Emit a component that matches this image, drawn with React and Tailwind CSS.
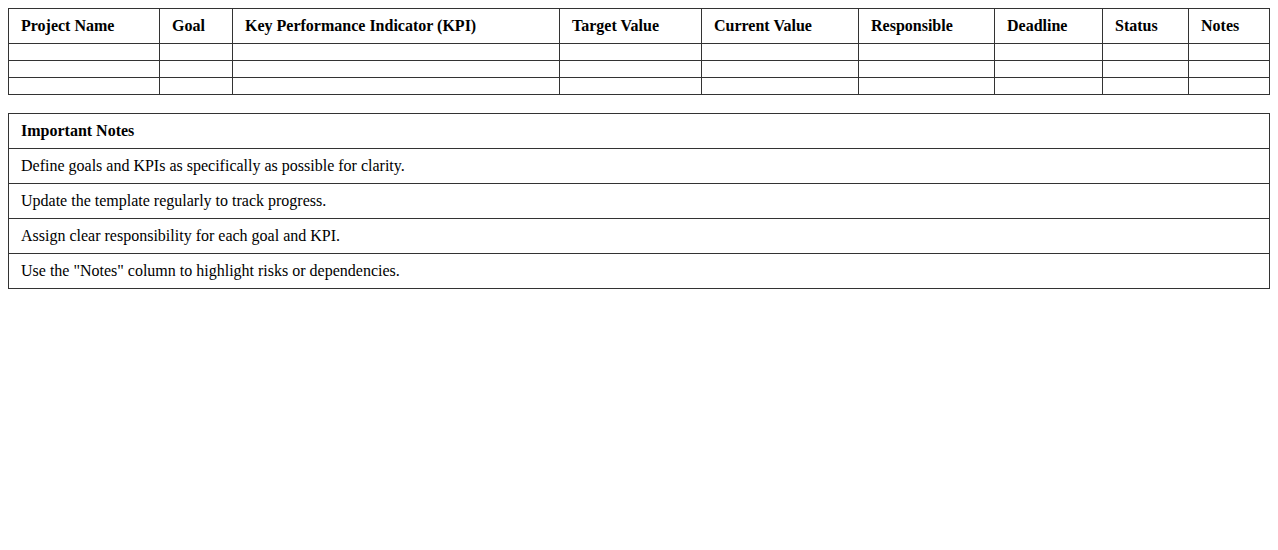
import React from "react";

const columns = [
  { label: "Project Name", width: "w-[151px]" },
  { label: "Goal", width: "w-[73px]" },
  { label: "Key Performance Indicator (KPI)", width: "w-[327px]" },
  { label: "Target Value", width: "w-[142px]" },
  { label: "Current Value", width: "w-[157px]" },
  { label: "Responsible", width: "w-[136px]" },
  { label: "Deadline", width: "w-[108px]" },
  { label: "Status", width: "w-[86px]" },
  { label: "Notes", width: "" },
];

const notes = [
  "Define goals and KPIs as specifically as possible for clarity.",
  "Update the template regularly to track progress.",
  "Assign clear responsibility for each goal and KPI.",
  'Use the "Notes" column to highlight risks or dependencies.',
];

function App() {
  return (
    <div className="p-2 bg-white text-black font-['Liberation_Serif','Times_New_Roman',serif] text-base leading-[18px]">
      <table className="w-full table-fixed border-collapse border border-[#333]">
        <thead>
          <tr>
            {columns.map((col) => (
              <th
                key={col.label}
                className={`${col.width} border border-[#333] px-3 py-2 text-left font-bold`}
              >
                {col.label}
              </th>
            ))}
          </tr>
        </thead>
        <tbody>
          {[0, 1, 2].map((row) => (
            <tr key={row}>
              {columns.map((col) => (
                <td
                  key={col.label}
                  className="border border-[#333] px-3 py-2 h-[17px]"
                ></td>
              ))}
            </tr>
          ))}
        </tbody>
      </table>

      <table className="w-full mt-[18px] border-collapse border border-[#333]">
        <thead>
          <tr>
            <th className="border border-[#333] px-3 py-2 text-left font-bold">
              Important Notes
            </th>
          </tr>
        </thead>
        <tbody>
          {notes.map((note) => (
            <tr key={note}>
              <td className="border border-[#333] px-3 py-2">{note}</td>
            </tr>
          ))}
        </tbody>
      </table>
    </div>
  );
}

export default App;
